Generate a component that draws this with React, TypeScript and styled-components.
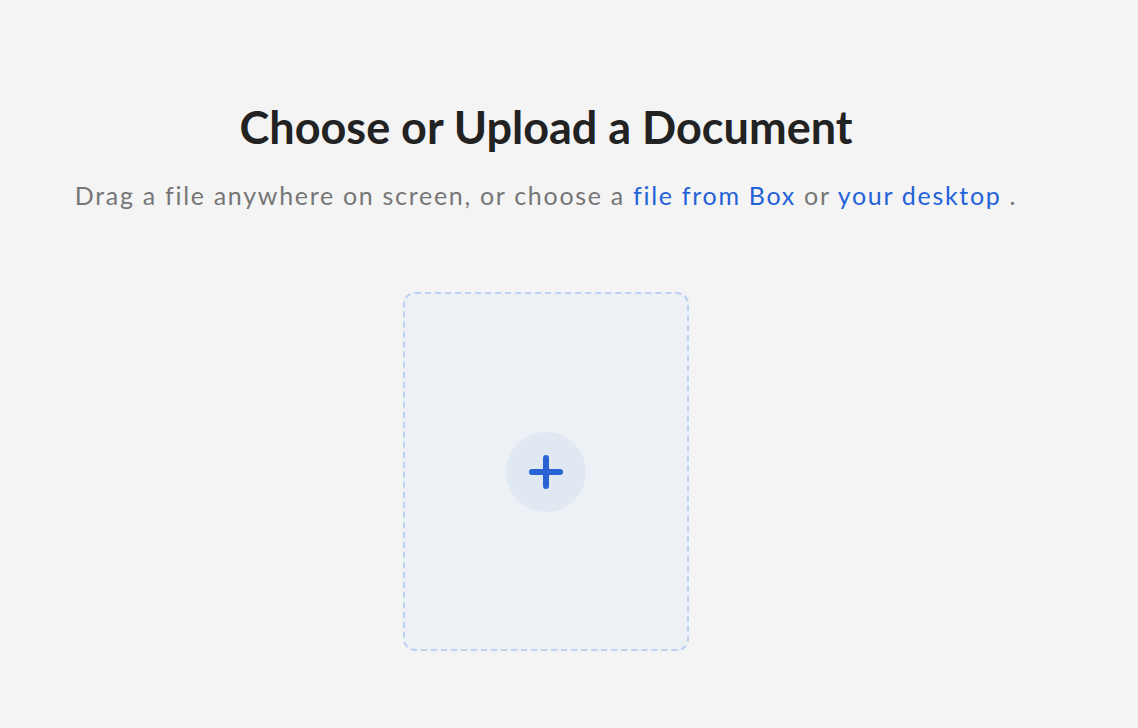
import styled, { createGlobalStyle } from "styled-components";

const GlobalStyle = createGlobalStyle`
  html, body {
    margin: 0;
    padding: 0;
    background: #f4f4f4;
    font-family: Lato, "Liberation Sans", sans-serif;
  }
`;

function PlusIcon() {
  return (
    <svg width="36" height="36" viewBox="0 0 36 36" fill="none">
      <path
        d="M18 4v28M4 18h28"
        stroke="#2a62d3"
        strokeWidth="6"
        strokeLinecap="round"
      />
    </svg>
  );
}

function App() {
  return (
    <>
      <GlobalStyle />
      <Page>
        <Title>Choose or Upload a Document</Title>
        <Subtitle>
          Drag a file anywhere on screen, or choose a{" "}
          <Link href="#">file from Box</Link> or{" "}
          <Link href="#">your desktop</Link> .
        </Subtitle>
        <DropZone type="button">
          <AddCircle>
            <PlusIcon />
          </AddCircle>
        </DropZone>
      </Page>
    </>
  );
}

const Page = styled.main`
  width: 1092px;
  min-height: 728px;
  box-sizing: border-box;
  padding-top: 100px;
  display: flex;
  flex-direction: column;
  align-items: center;
`;

const Title = styled.h1`
  margin: 0;
  font-size: 45px;
  line-height: 54px;
  font-weight: 700;
  color: #222222;
`;

const Subtitle = styled.p`
  margin: 26px 0 0;
  font-size: 25px;
  line-height: 30px;
  letter-spacing: 1.7px;
  white-space: nowrap;
  color: #767676;
`;

const Link = styled.a`
  color: #2462d8;
  text-decoration: none;
`;

const DropZone = styled.button`
  margin-top: 82px;
  width: 286px;
  height: 359px;
  box-sizing: border-box;
  border: 2px dashed #bcd2f2;
  border-radius: 12px;
  background: #edf1f6;
  display: flex;
  align-items: center;
  justify-content: center;
  padding: 0;
  cursor: pointer;
`;

const AddCircle = styled.span`
  width: 80px;
  height: 80px;
  border-radius: 50%;
  background: #e0e8f2;
  display: flex;
  align-items: center;
  justify-content: center;
`;

export default App;
